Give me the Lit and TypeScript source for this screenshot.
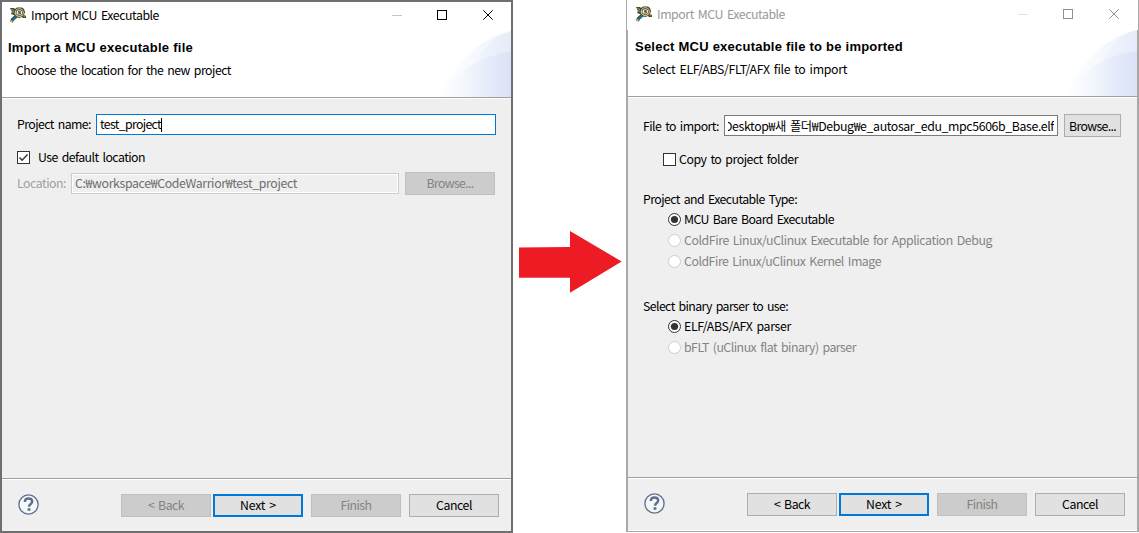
import { LitElement, html, css, svg, nothing } from "lit";
import { customElement, property } from "lit/decorators.js";
import { classMap } from "lit/directives/class-map.js";

/** A single line of text whose tracking is adjusted to fill a given width. */
@customElement("fit-text")
class FitText extends LitElement {
  static styles = css`
    :host { display: block; flex: none; height: 16px; line-height: 16px; white-space: pre; }
    .line { display: inline-block; line-height: 16px; vertical-align: top; }
  `;
  @property() text = "";
  @property({ type: Number }) width = 0;

  render() {
    return html`<span class="line">${this.text}</span>`;
  }

  updated() {
    const line = this.renderRoot.querySelector(".line") as HTMLElement;
    line.style.letterSpacing = "0px";
    const natural = line.getBoundingClientRect().width;
    const count = [...this.text].length;
    line.style.letterSpacing = `${(this.width - natural) / count}px`;
    this.style.width = `${this.width}px`;
  }
}

const t = (text: string, width: number) => html`<fit-text .text=${text} .width=${width}></fit-text>`;

const appIcon = svg`
  <path d="M1.5 15L2.5 12.5L7 8.5" fill="none" stroke="#2a3f45" stroke-width="3.2"/>
  <path d="M2.8 12.8L7.2 8.6" fill="none" stroke="#1c7598" stroke-width="2.2"/>
  <path d="M.8 15.2L2.4 13.2" fill="none" stroke="#e8bf3c" stroke-width="1.6"/>
  <path d="M0 1H4L5 2L7 .5H12L14 2L15 5L14 8L16 9V11H13L12 10L9 11L6 10L4 8L1 7L2 5Z" fill="#3c4430"/>
  <path d="M1.5 2L3.5 3.5L2.8 6.2M13.5 8.5L15 10" fill="none" stroke="#8f9157" stroke-width="1.2"/>
  <path d="M3.8 5L6 8" fill="none" stroke="#1f7f9e" stroke-width="1.8"/>
  <ellipse cx="9.3" cy="5.6" rx="4" ry="3.8" fill="#2f3639" stroke="#e8c85a" stroke-width="1.1"/>
  <ellipse cx="9.3" cy="5.6" rx="2.9" ry="2.6" fill="#e9ebe8"/>
  <path d="M10.8 4.3H8.6V5.6H10.4V7H8" fill="none" stroke="#30373b" stroke-width=".9"/>`;

@customElement("wizard-dialog")
class WizardDialog extends LitElement {
  static styles = css`
    :host { display: block; flex: none; }
    .win { box-sizing: border-box; width: 513px; height: 533px; border: 2px solid #6f6f6f;
      display: flex; flex-direction: column; background: #efefef; color: #000; }
    .win.inactive { height: 532px; border-color: #a9a9a9; border-top: 0; border-bottom-width: 1px; }
    .title { height: 29px; flex: none; background: #fff; display: flex; align-items: flex-start;
      padding: 5px 18px 0 8px; box-sizing: border-box; }
    .inactive .title { height: 30px; margin: 0 -1px; padding: 6px 19px 0 9px; color: #999; }
    .appicon { width: 16px; height: 16px; margin-right: 5px; }
    .title fit-text { margin-top: 0; }
    .inactive .title fit-text { margin-top: 0; }
    .controls { margin-left: auto; width: 101px; height: 10px; margin-top: 3px; }
    .banner { height: 66px; flex: none; display: flex; background: #fff; border-bottom: 1px solid #a0a0a0; }
    .heads { flex: 1; padding: 9px 0 0 6px; }
    .inactive .heads { padding-left: 7px; }
    .h { font: bold 13px "Liberation Sans", Arial, sans-serif; word-spacing: 0; }
    .sub { margin: 6px 0 0 8px; }
    .inactive .sub { margin-left: 7px; }
    .art { width: 73px; height: 66px; }
    .body { flex: 1; border-top: 1px solid #fff; min-height: 0; }
    .foot { height: 53px; box-sizing: border-box; flex: none; border-top: 1px solid #a0a0a0; display: flex;
      padding: 0 12px 0 16px; box-shadow: inset 0 1px #fff; }
    .inactive .foot { height: 54px; border-bottom: 1px solid #fff; }
    .help { width: 22px; height: 22px; margin-top: 15px; }
    .btns { display: flex; margin: 15px 0 0 auto; }
    .btn { width: 90px; height: 23px; box-sizing: border-box; border: 1px solid #adadad; background: #e1e1e1;
      display: flex; align-items: center; justify-content: center; flex: none; padding-bottom: 2px; }
    .btn.primary { border: 2px solid #0078d7; margin: 0 8px 0 2px; }
    .btn.off { background: #ccc; border-color: #bfbfbf; color: #838383; }
    .btn.last { margin-left: 8px; }
  `;
  @property() caption = "";
  @property({ type: Object }) heading: [string, number] = ["", 0];
  @property({ type: Object }) sub: [string, number] = ["", 0];
  @property({ type: Boolean }) inactive = false;

  render() {
    const ink = this.inactive ? "#8f8f8f" : "#000";
    return html`<div class=${classMap({ win: true, inactive: this.inactive })}>
      <div class="title">
        <svg class="appicon" viewBox="0 0 16 16">${appIcon}</svg>
        ${t(this.caption, 128)}
        <svg class="controls" viewBox="0 0 101 10" fill="none" stroke=${ink}>
          <path d="M0 5.5h10" stroke=${this.inactive ? "#e4e4e4" : "#c8c8c8"}/>
          <rect x="45.5" y=".5" width="9" height="9"/>
          <path d="M91.3 .3l9.4 9.4M100.7 .3l-9.4 9.4"/>
        </svg>
      </div>
      <div class="banner">
        <div class="heads">
          <div class="h">${t(...this.heading)}</div>
          <div class="sub">${t(...this.sub)}</div>
        </div>
        <svg class="art" viewBox="0 0 73 66">
          <defs>
            <linearGradient id="a"><stop offset="0" stop-color="#fff"/><stop offset=".45" stop-color="#f7f9fd"/><stop offset="1" stop-color="#edf2fb"/></linearGradient>
            <linearGradient id="b"><stop offset="0" stop-color="#f3f6fd"/><stop offset="1" stop-color="#e5ebf9"/></linearGradient>
            <linearGradient id="c"><stop offset="0" stop-color="#fff"/><stop offset=".4" stop-color="#f2f6fd"/><stop offset=".75" stop-color="#e2e9f8"/><stop offset="1" stop-color="#dbe2f6"/></linearGradient>
          </defs>
          <path d="M0 66C18 30 44 6 73 0V66Z" fill="url(#a)"/>
          <path d="M36 34C44 18 56 5 73 0V66H36Z" fill="url(#b)"/>
          <path d="M0 66C18 40 44 24 73 21V66Z" fill="url(#c)"/>
        </svg>
      </div>
      <div class="body"><slot></slot></div>
      <div class="foot">
        <svg class="help" viewBox="0 0 22 22" fill="none">
          <circle cx="10.5" cy="10.5" r="9.6" fill="#f6f7f9" stroke="#5d708e" stroke-width="1.3"/>
          <path d="M6.8 8C6.8 5.6 8.3 4.5 10.5 4.5S14.2 5.7 14.2 7.6C14.2 10 11 10 11 12.8" stroke="#5d708e" stroke-width="2.4"/>
          <rect x="9.6" y="14.2" width="2.8" height="2.6" fill="#5d708e"/>
        </svg>
        <div class="btns">
          <div class=${classMap({ btn: true, off: !this.inactive })}>${t("< Back", 36)}</div>
          <div class="btn primary">${t("Next >", 36)}</div>
          <div class="btn off">${t("Finish", 31)}</div>
          <div class="btn last">${t("Cancel", 36)}</div>
        </div>
      </div>
    </div>`;
  }
}

@customElement("app-root")
class AppRoot extends LitElement {
  static styles = css`
    :host { display: flex; width: 1139px; height: 533px; background: #fff; overflow: hidden;
      font: 12.3px "Noto Sans CJK KR", "Noto Sans", sans-serif; word-spacing: 1.6px; }
    .arrow { width: 113px; height: 533px; flex: none; }
    .row { display: flex; align-items: center; }
    .field { box-sizing: border-box; height: 21px; border: 1px solid #7a7a7a; background: #fff; display: flex;
      align-items: center; overflow: hidden; padding: 0 3px; flex: none; margin-left: 5px; }
    .field.focus { width: 400px; border-color: #0078d7; }
    .field.off { width: 328px; border-color: #ccc; background: #efefef; box-shadow: inset 0 0 0 1px #fff; color: #6d6d6d; }
    .field.file { width: 334px; }
    .name fit-text { margin-top: -1px; }
    .clip { width: 326px; overflow: hidden; display: flex; justify-content: flex-end; }
    .caret { width: 1px; height: 14px; background: #000; }
    .btn { box-sizing: border-box; height: 23px; width: 90px; margin-left: 6px; display: flex; align-items: center;
      justify-content: center; border: 1px solid #bfbfbf; background: #ccc; color: #838383; }
    .btn.on { width: 57px; border-color: #adadad; background: #e1e1e1; color: #000; }
    .name { padding: 15px 0 0 15px; }
    .default { padding: 14px 0 0 15px; gap: 8px; }
    .loc { padding: 7px 0 0 15px; color: #a0a0a0; }
    .loc fit-text { margin-top: -1px; }
    .box { width: 13px; height: 13px; flex: none; }
    .import { padding: 16px 0 0 15px; }
    .copy { padding: 14px 0 0 35px; gap: 3px; }
    .group { padding: 24px 0 0 15px; }
    .group.second { padding-top: 29px; }
    .radios { padding: 4px 0 0 40px; display: grid; gap: 5px; }
    .radio { display: flex; align-items: center; gap: 3px; }
    .radio.off { color: #838383; }
  `;

  check(on: boolean) {
    return html`<svg class="box" viewBox="0 0 13 13"><rect x=".5" y=".5" width="12" height="12" fill="#fff" stroke="#333"/>
      ${on ? svg`<path d="M2.5 6.5L5 9.2L10.6 3.4" fill="none" stroke="#333" stroke-width="1.4"/>` : nothing}</svg>`;
  }

  radio(label: string, width: number, on: boolean) {
    return html`<div class=${classMap({ radio: true, off: !on })}>
      <svg class="box" viewBox="0 0 13 13"><circle cx="6.5" cy="6.5" r="6" fill="#fff" stroke=${on ? "#333" : "#ccc"}/>
      ${on ? svg`<circle cx="6.5" cy="6.5" r="3.6" fill="#333"/>` : nothing}</svg>${t(label, width)}</div>`;
  }

  render() {
    return html`
      <wizard-dialog caption="Import MCU Executable" .heading=${["Import a MCU executable file", 185]}
        .sub=${["Choose the location for the new project", 215]}>
        <div class="row name">${t("Project name:", 74)}
          <div class="field focus">${t("test_project", 61)}<span class="caret"></span></div></div>
        <div class="row default">${this.check(true)}${t("Use default location", 107)}</div>
        <div class="row loc">${t("Location:", 49)}
          <div class="field off">${t("C:₩workspace₩CodeWarrior₩test_project", 222)}</div>
          <div class="btn">${t("Browse...", 47)}</div></div>
      </wizard-dialog>
      <svg class="arrow" viewBox="0 0 113 533"><path d="M6 247.4L57 247V231L108.7 261.5L57 292.8V277.8H6Z" fill="#ed1c24"/></svg>
      <wizard-dialog inactive caption="Import MCU Executable" .heading=${["Select MCU executable file to be imported", 268]}
        .sub=${["Select ELF/ABS/FLT/AFX file to import", 205]}>
        <div class="row import">${t("File to import:", 76)}
          <div class="field file"><div class="clip">${t("Desktop₩새 폴더₩Debug₩e_autosar_edu_mpc5606b_Base.elf", 330)}</div></div>
          <div class="btn on">${t("Browse...", 47)}</div></div>
        <div class="row copy">${this.check(false)}${t("Copy to project folder", 119)}</div>
        <div class="group">${t("Project and Executable Type:", 154)}</div>
        <div class="radios">
          ${this.radio("MCU Bare Board Executable", 150, true)}
          ${this.radio("ColdFire Linux/uClinux Executable for Application Debug", 308, false)}
          ${this.radio("ColdFire Linux/uClinux Kernel Image", 197, false)}
        </div>
        <div class="group second">${t("Select binary parser to use:", 145)}</div>
        <div class="radios">
          ${this.radio("ELF/ABS/AFX parser", 107, true)}
          ${this.radio("bFLT (uClinux flat binary) parser", 172, false)}
        </div>
      </wizard-dialog>`;
  }
}
